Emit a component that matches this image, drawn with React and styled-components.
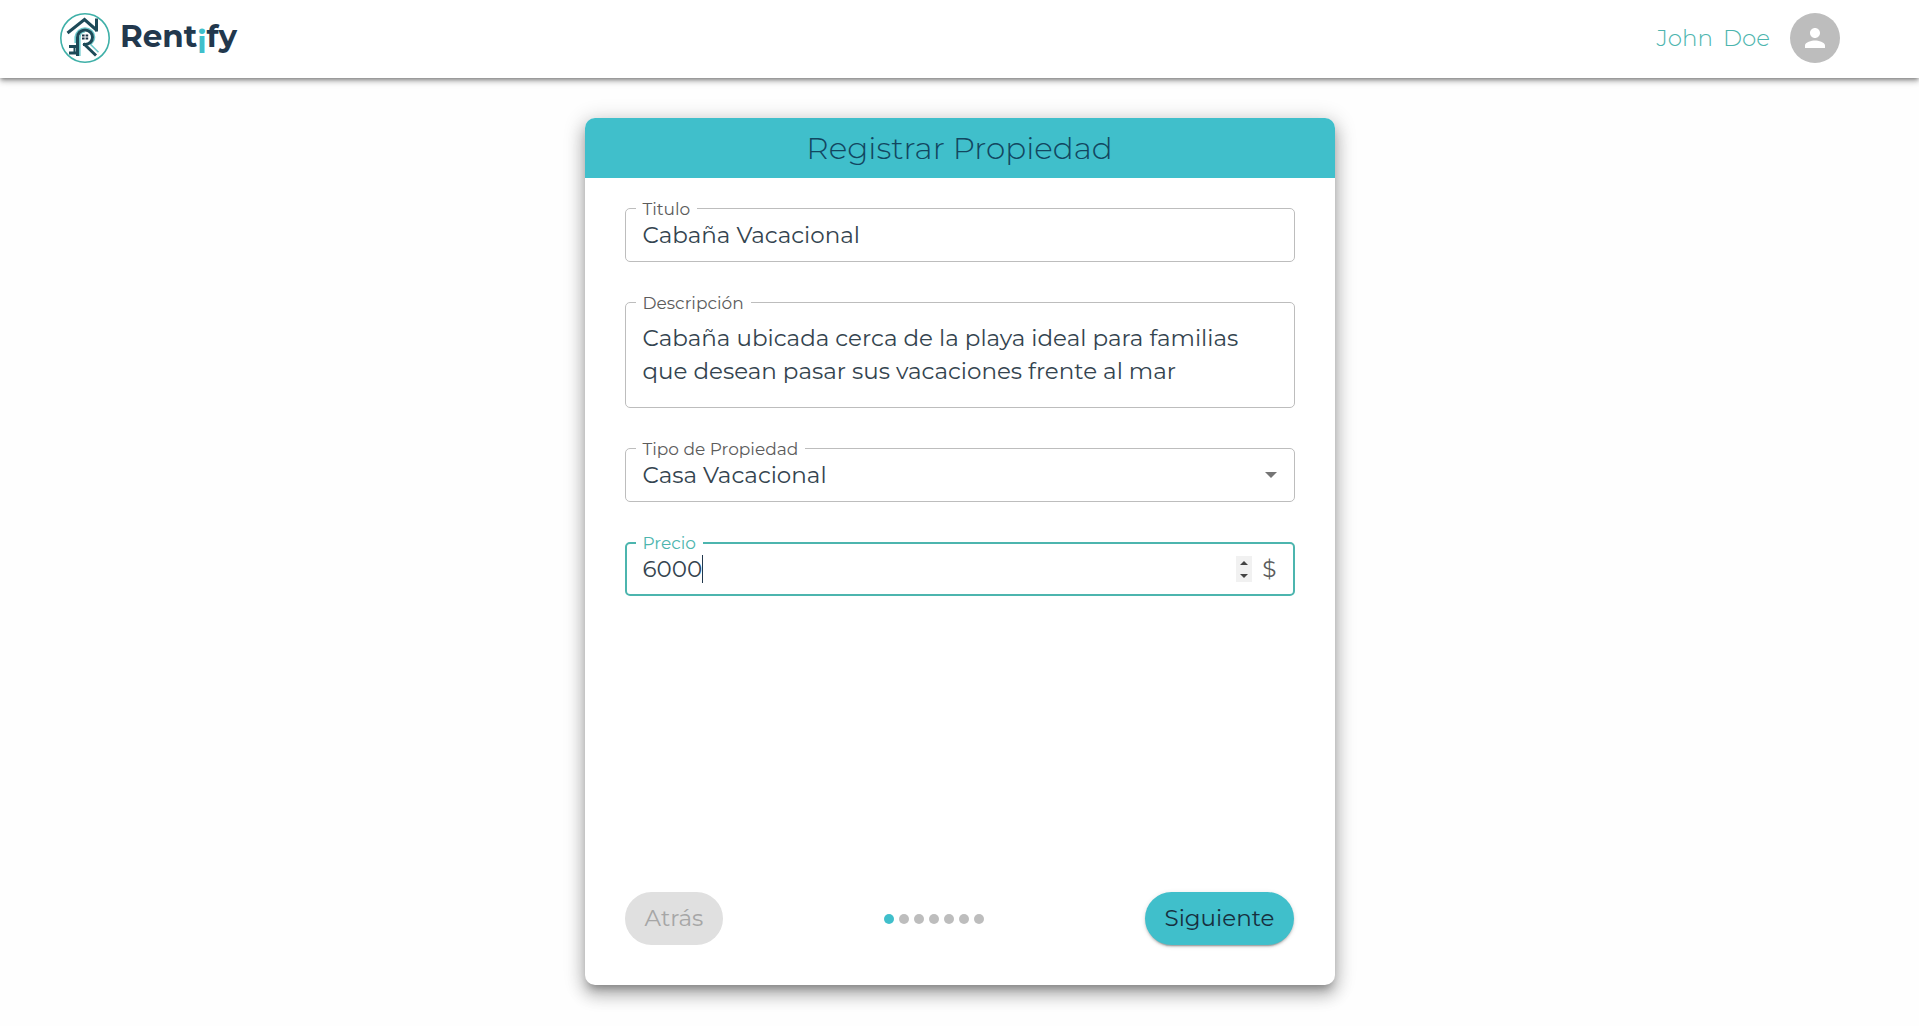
import { useState } from 'react'
import styled, { createGlobalStyle, css } from 'styled-components'

const color = {
  primary: '#40bfcb',
  accent: '#4cb5ae',
  dark: '#22384d',
  text: '#34444f',
  label: '#5c5c5c',
  border: '#bdbdbd',
  muted: '#bdbdbd',
}

const STEPS = 7
const propertyTypes = ['Casa Vacacional', 'Apartamento', 'Habitación']

export default function App() {
  const [title, setTitle] = useState('Cabaña Vacacional')
  const [description, setDescription] = useState(
    'Cabaña ubicada cerca de la playa ideal para familias que desean pasar sus vacaciones frente al mar'
  )
  const [type, setType] = useState(propertyTypes[0])
  const [price, setPrice] = useState('6000')
  const [step, setStep] = useState(0)

  const changePrice = (amount) => setPrice(String(Math.max(0, Number(price) + amount)))

  return (
    <>
      <GlobalStyle />
      <Header>
        <Brand href="#">
          <Logo />
          <BrandName>Rent<BrandAccent>i</BrandAccent>fy</BrandName>
        </Brand>
        <User>
          <UserName><span>John</span><span>Doe</span></UserName>
          <Avatar type="button" aria-label="Perfil">
            <svg width="30" height="30" viewBox="0 0 24 24" fill="#fff" aria-hidden="true">
              <path d="M12 12c2.21 0 4-1.79 4-4s-1.79-4-4-4-4 1.79-4 4 1.79 4 4 4zm0 2c-2.67 0-8 1.34-8 4v2h16v-2c0-2.66-5.33-4-8-4z" />
            </svg>
          </Avatar>
        </User>
      </Header>
      <Main>
        <Card onSubmit={(e) => e.preventDefault()}>
          <CardTitle>Registrar Propiedad</CardTitle>
          <Fields>
            <Field>
              <Label htmlFor="title">Titulo</Label>
              <Input id="title" value={title} onChange={(e) => setTitle(e.target.value)} />
            </Field>
            <Field>
              <Label htmlFor="description">Descripción</Label>
              <TextArea id="description" rows={2} value={description} onChange={(e) => setDescription(e.target.value)} />
            </Field>
            <Field>
              <Label htmlFor="type">Tipo de Propiedad</Label>
              <Select id="type" value={type} onChange={(e) => setType(e.target.value)}>
                {propertyTypes.map((name) => <option key={name}>{name}</option>)}
              </Select>
              <SelectArrow width="12" height="6" viewBox="0 0 12 6" aria-hidden="true">
                <path d="M0 0h12L6 6z" fill="#757575" />
              </SelectArrow>
            </Field>
            <Field $active>
              <Label htmlFor="price" $active>Precio</Label>
              <PriceInput id="price" inputMode="numeric" value={price} onChange={(e) => setPrice(e.target.value)} />
              <Caret />
              <Spinner>
                <SpinButton type="button" aria-label="Aumentar" onClick={() => changePrice(1)}>
                  <svg width="8" height="4" viewBox="0 0 8 4"><path d="M0 4h8L4 0z" fill="#444" /></svg>
                </SpinButton>
                <SpinButton type="button" aria-label="Disminuir" onClick={() => changePrice(-1)}>
                  <svg width="8" height="4" viewBox="0 0 8 4"><path d="M0 0h8L4 4z" fill="#444" /></svg>
                </SpinButton>
              </Spinner>
              <Currency>$</Currency>
            </Field>
          </Fields>
          <Actions>
            <ActionButton type="button" disabled={step === 0} onClick={() => setStep(step - 1)}>Atrás</ActionButton>
            <Dots>
              {Array.from({ length: STEPS }, (_, i) => <Dot key={i} $active={i === step} />)}
            </Dots>
            <ActionButton type="button" disabled={step === STEPS - 1} onClick={() => setStep(step + 1)}>Siguiente</ActionButton>
          </Actions>
        </Card>
      </Main>
    </>
  )
}

function Logo() {
  return (
    <svg width="50" height="50" viewBox="0 0 50 50" fill="none" aria-hidden="true">
      <circle cx="25" cy="25" r="24.2" stroke="#3fb0a8" strokeWidth="1.6" />
      <g stroke="#6cc9cb" strokeWidth="1.6">
        <path d="M19.8 43V25c0-3.4 2-6 5-6" />
        <path d="M15.2 30v-6c.8-5 4.800-9 9.800-9s9.500 4 9.500 9c0 3-1.500 5.500-4 7.300l8 8" />
      </g>
      <g stroke="#1d4a58" strokeWidth="3">
        <path d="M7.500 20L24.500 6.500 37 17.500" />
        <path d="M36.500 5.500v13" />
        <path d="M17.500 43V24.500c0-4.300 3.200-7.500 7.500-7.500s7.500 3.200 7.500 7.300-3.200 7.200-7.500 7.200h-2" />
        <path d="M23.500 30.500l12.500 12" />
        <path d="M17 33.500H9M17 40H9" />
      </g>
      <path d="M14.500 33v7" stroke="#1d4a58" strokeWidth="2" />
      <path d="M22 21.500h2.600v2H22zM25.600 21.500h2.600v2h-2.600zM22 24.500h2.600v2H22zM25.600 24.500h2.600v2h-2.600z" fill="#1d3648" />
    </svg>
  )
}

const GlobalStyle = createGlobalStyle`
  * {
    box-sizing: border-box;
  }
  body {
    margin: 0;
    background: #fefefe;
    color: ${color.text};
    font-family: Montserrat, Inter, sans-serif;
    font-size: 23px;
    font-weight: 400;
  }
  button, input, select, textarea {
    font: inherit;
    color: inherit;
  }
`
const Header = styled.header`
  display: flex;
  align-items: center;
  justify-content: space-between;
  height: 78px;
  padding: 0 79px 2px 60px;
  background: #fff;
  box-shadow: 0 2px 4px -1px rgba(0, 0, 0, 0.4), 0 4px 5px rgba(0, 0, 0, 0.16), 0 1px 10px rgba(0, 0, 0, 0.12);
`
const Brand = styled.a`
  display: flex;
  align-items: center;
  gap: 10px;
  color: ${color.dark};
  text-decoration: none;
`
const BrandName = styled.span`
  padding-bottom: 2px;
  font-size: 31px;
  font-weight: 700;
  line-height: 40px;
`
const BrandAccent = styled.span`
  color: ${color.primary};
  line-height: 1;
  vertical-align: -6px;
`
const User = styled.div`
  display: flex;
  align-items: center;
  gap: 20px;
`
const UserName = styled.div`
  display: flex;
  gap: 10px;
  color: ${color.accent};
  font-weight: 300;
`
const Avatar = styled.button`
  display: flex;
  align-items: center;
  justify-content: center;
  width: 50px;
  height: 50px;
  padding: 0;
  border: none;
  border-radius: 50%;
  background: ${color.muted};
  cursor: pointer;
`
const Main = styled.main`
  display: flex;
  justify-content: center;
  padding: 40px 16px;
`
const Card = styled.form`
  display: flex;
  flex-direction: column;
  width: 100%;
  max-width: 750px;
  min-height: 867px;
  border-radius: 10px;
  background: #fff;
  overflow: hidden;
  box-shadow: 0 7px 8px -4px rgba(0, 0, 0, 0.3), 0 10px 16px 2px rgba(0, 0, 0, 0.18), 0 3px 20px 3px rgba(0, 0, 0, 0.16);
`
const CardTitle = styled.h1`
  margin: 0;
  background: ${color.primary};
  color: #124660;
  font-size: 31px;
  font-weight: 300;
  line-height: 60px;
  text-align: center;
`
const Fields = styled.div`
  display: flex;
  flex: 1;
  flex-direction: column;
  gap: 40px;
  padding: 30px 40px;
`
const Field = styled.div`
  position: relative;
  display: flex;
  align-items: center;
  min-height: 54px;
  padding: 0 17px;
  border: 1px solid ${color.border};
  border-radius: 5px;
  ${({ $active }) => $active && css`
    padding: 0 16px;
    border: 2px solid ${color.accent};
  `}
`
const Label = styled.label`
  position: absolute;
  top: ${({ $active }) => ($active ? '-13px' : '-12px')};
  left: ${({ $active }) => ($active ? '9px' : '10px')};
  padding: 0 7px;
  background: #fff;
  color: ${({ $active }) => ($active ? color.accent : color.label)};
  font-size: 17px;
  line-height: 24px;
`
const control = css`
  width: 100%;
  padding: 0;
  border: none;
  outline: none;
  background: transparent;
  line-height: 33px;
`
const Input = styled.input`
  ${control}
`
const TextArea = styled.textarea`
  ${control}
  display: block;
  height: 104px;
  padding: 19px 0;
  resize: none;
  overflow: hidden;
`
const Select = styled.select`
  ${control}
  appearance: none;
  cursor: pointer;
`
const SelectArrow = styled.svg`
  flex: none;
  pointer-events: none;
`
const PriceInput = styled.input`
  ${control}
  width: auto;
  field-sizing: content;
  caret-color: transparent;
`
const Caret = styled.span`
  width: 1px;
  height: 28px;
  background: ${color.dark};
`
const Spinner = styled.span`
  display: flex;
  flex-direction: column;
  margin: 0 10px 0 auto;
  background: #f1f1f1;
`
const SpinButton = styled.button`
  display: flex;
  align-items: center;
  justify-content: center;
  width: 16px;
  height: 13px;
  padding: 0;
  border: none;
  background: transparent;
`
const Currency = styled.span`
  color: ${color.label};
`
const Actions = styled.div`
  display: flex;
  align-items: center;
  justify-content: space-between;
  padding: 0 40px 40px;
`
const ActionButton = styled.button`
  padding: 0 20px;
  border: none;
  border-radius: 27px;
  background: ${color.primary};
  color: #17303f;
  line-height: 53px;
  cursor: pointer;
  box-shadow: 0 3px 1px -2px rgba(0, 0, 0, 0.2), 0 2px 2px rgba(0, 0, 0, 0.14), 0 1px 5px rgba(0, 0, 0, 0.12);
  &:disabled {
    background: #e0e0e0;
    color: #a6a6a6;
    box-shadow: none;
    cursor: default;
  }
`
const Dots = styled.div`
  display: flex;
  gap: 5px;
`
const Dot = styled.span`
  width: 10px;
  height: 10px;
  border-radius: 50%;
  background: ${({ $active }) => ($active ? color.primary : color.muted)};
`
